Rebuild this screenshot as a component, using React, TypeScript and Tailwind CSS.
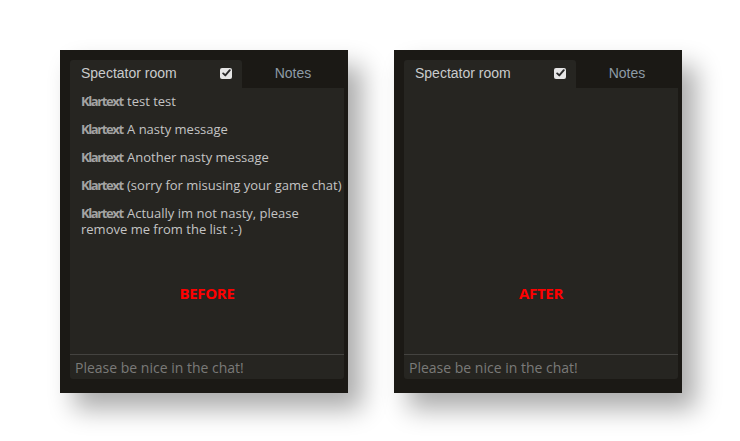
import React from "react";

const messages = [
  "test test",
  "A nasty message",
  "Another nasty message",
  "(sorry for misusing your game chat)",
  "Actually im not nasty, please remove me from the list :-)",
];

function CheckBox() {
  return (
    <span className="flex h-[11px] w-[12px] items-center justify-center rounded-[2px] bg-[#e6e6e6]">
      <svg width="9" height="8" viewBox="0 0 9 8">
        <path d="M1.2 4.4 L3.3 6.4 L7.8 1.2" fill="none" stroke="#2a2a2a" strokeWidth="1.9" strokeLinecap="round" strokeLinejoin="round" />
      </svg>
    </span>
  );
}

function Panel({ label, showMessages }: { label: string; showMessages: boolean }) {
  return (
    <div className="flex h-[343px] w-[288px] flex-col bg-[#1b1915] pb-[14px] pl-[10px] pr-[4px] pt-[10px] shadow-[14px_16px_24px_rgba(0,0,0,0.33)]">
      <div className="flex h-[28px] shrink-0">
        <div className="flex w-[172px] items-center justify-between rounded-t-[3px] bg-[#262521] pb-[2px] pl-[11px] pr-[10px] font-['Liberation_Sans',Arial,sans-serif] text-[14px] text-[#c9cbcc]">
          <span>Spectator room</span>
          <CheckBox />
        </div>
        <div className="flex flex-1 items-center justify-center pb-[2px] font-['Liberation_Sans',Arial,sans-serif] text-[14px] text-[#8d9ba6]">
          Notes
        </div>
      </div>
      <div className="relative flex flex-1 flex-col rounded-b-[3px] bg-[#262521]">
        <div className="flex-1 pl-[11px] pr-[1px] pt-[5px] font-['Open_Sans',sans-serif] text-[13px] leading-[16px] text-[#c4c4c4]">
          {showMessages &&
            messages.map((m, i) => (
              <div key={i} className="mb-[12px]">
                <span className="font-bold tracking-[-1.4px] text-[#a3a3a3]">Klartext</span>
                <span className="ml-[1px]"> {m}</span>
              </div>
            ))}
        </div>
        <div className="absolute left-0 right-0 top-[194px] text-center font-['Open_Sans',sans-serif] text-[15px] font-bold tracking-[-0.3px] text-[#ff0000]">
          {label}
        </div>
        <div className="flex h-[25px] items-center border-t border-[#444340] pl-[5px] font-['Open_Sans',sans-serif] text-[14px] text-[#7a7a78]">
          Please be nice in the chat!
        </div>
      </div>
    </div>
  );
}

export default function App() {
  return (
    <div className="h-[441px] w-[740px] bg-white">
      <div className="flex gap-[46px] pl-[60px] pt-[50px]">
        <Panel label="BEFORE" showMessages={true} />
        <Panel label="AFTER" showMessages={false} />
      </div>
    </div>
  );
}
